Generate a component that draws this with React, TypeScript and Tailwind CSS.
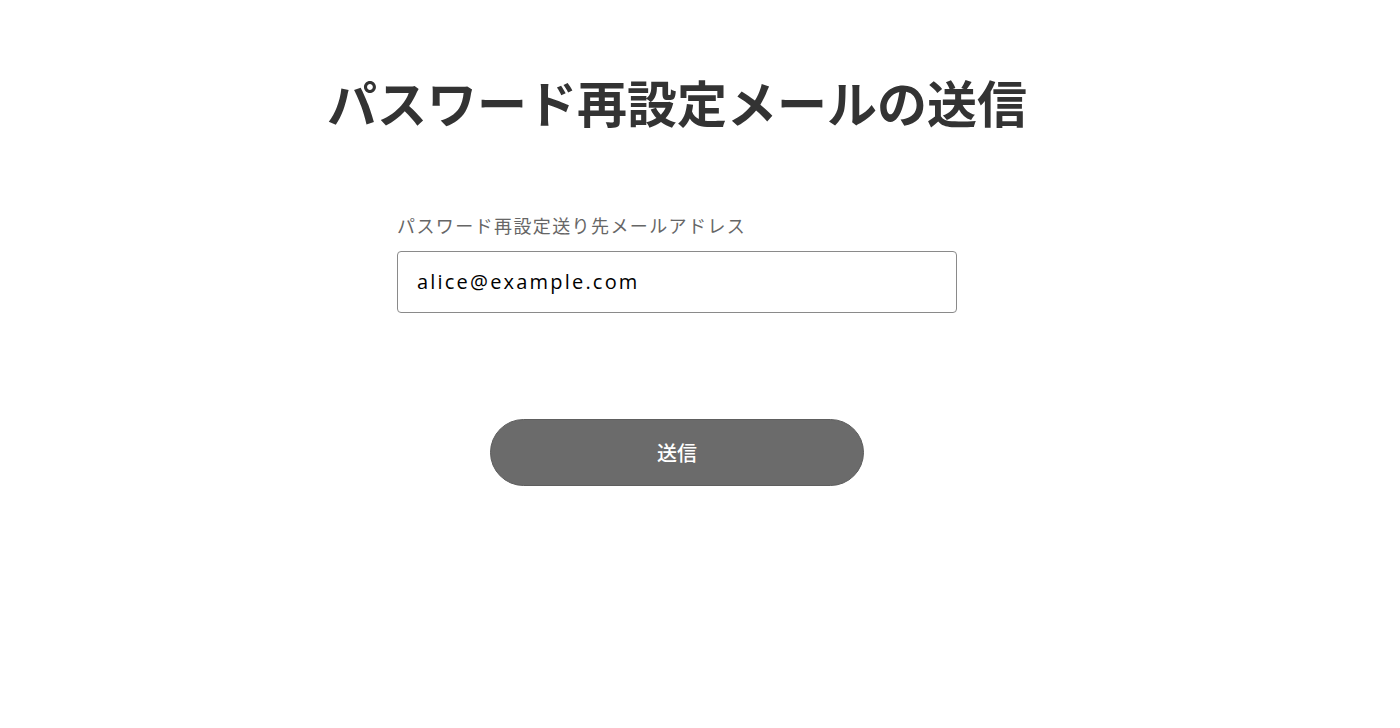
import React from "react";

export default function App() {
  return (
    <div
      className="min-h-[728px] w-[1354px] bg-white flex flex-col items-center"
      style={{ fontFamily: '"Noto Sans CJK JP", "Noto Sans", sans-serif' }}
    >
      <h1 className="mt-[74px] text-[50px] leading-[54px] font-bold text-[#333333]">
        パスワード再設定メールの送信
      </h1>
      <div className="mt-[85px] w-[560px] flex flex-col">
        <label className="text-[18px] leading-[24px] text-[#666666] tracking-[1.4px]">
          パスワード再設定送り先メールアドレス
        </label>
        <input
          type="text"
          defaultValue="alice@example.com"
          className="mt-[14px] h-[62px] w-[560px] border border-[#8a8a8a] rounded-[4px] px-[19px] pb-[1px] text-[20px] text-black tracking-[2.2px] outline-none"
          style={{ fontFamily: '"Open Sans", Arial, sans-serif' }}
        />
      </div>
      <button className="mt-[106px] w-[374px] h-[67px] rounded-full bg-[#6b6b6b] border border-[#5e5e5e] text-white text-[20px] font-medium leading-none">
        送信
      </button>
    </div>
  );
}
